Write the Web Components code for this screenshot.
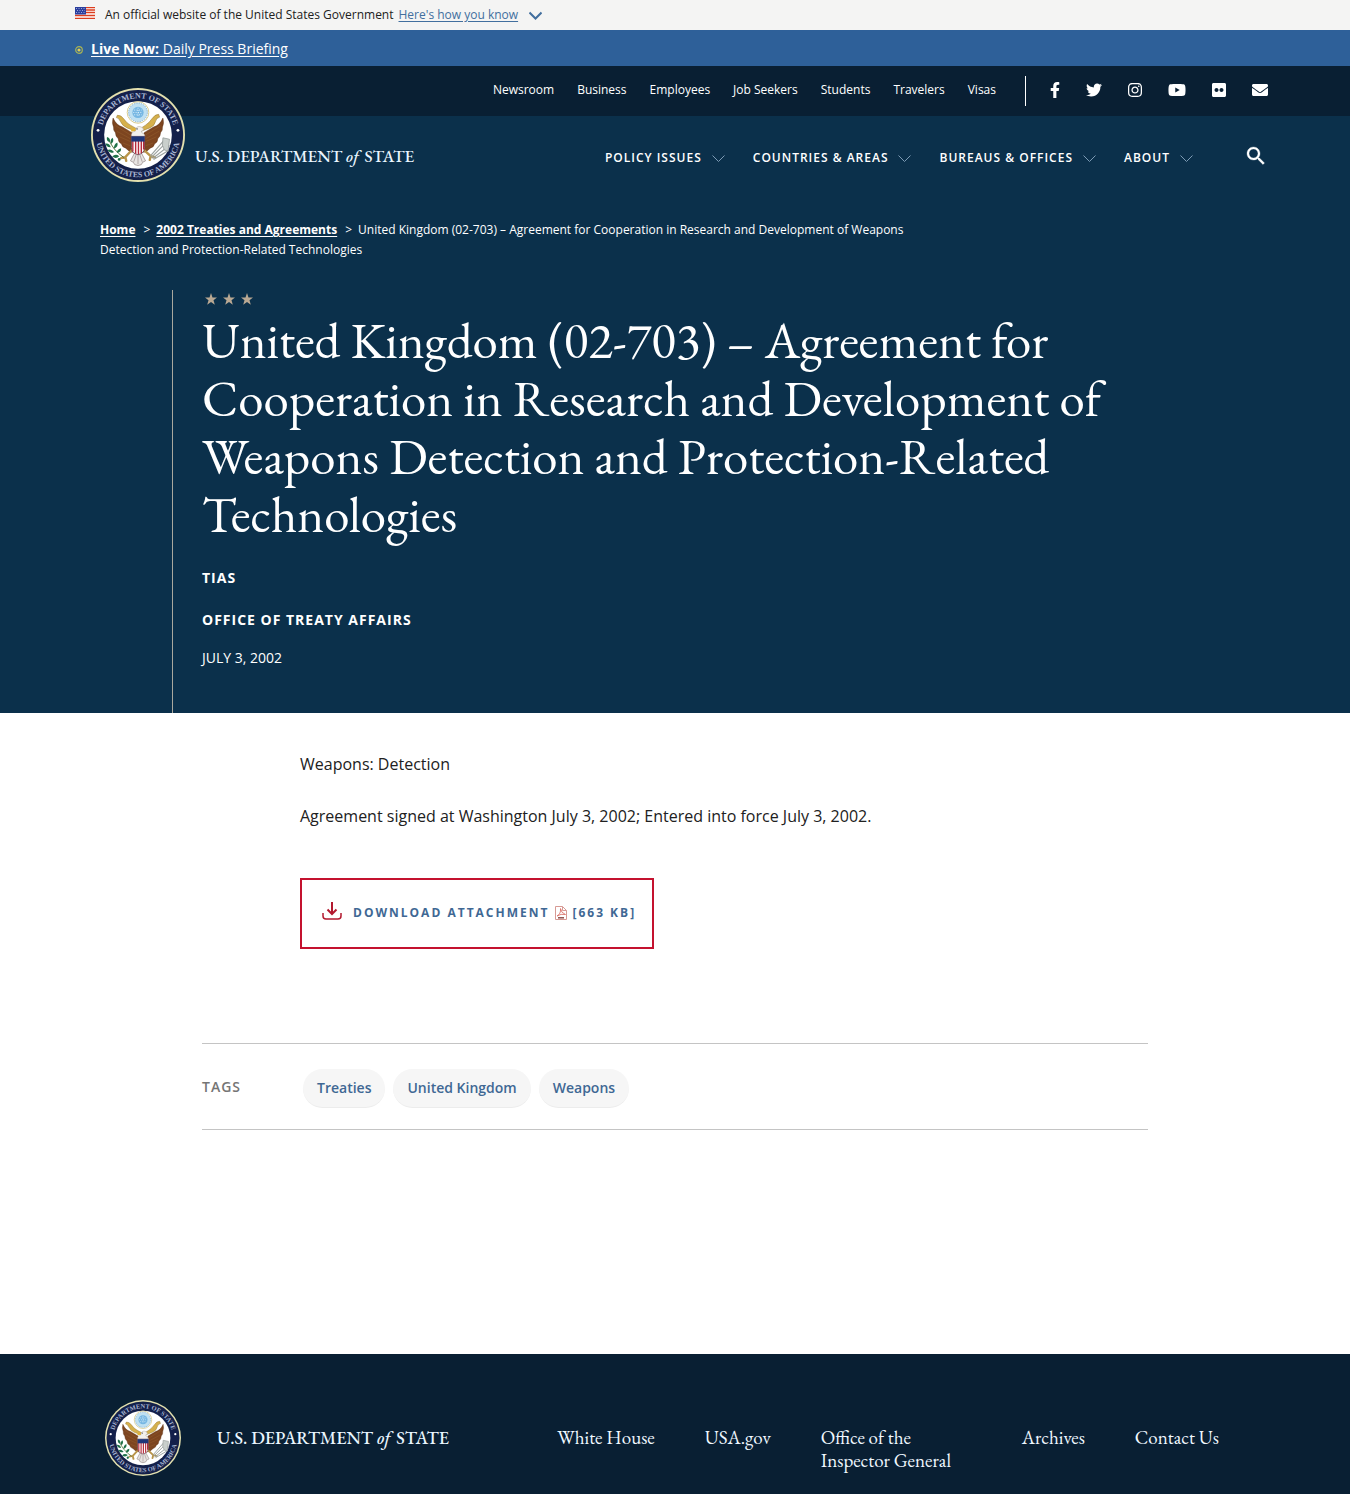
<!DOCTYPE html>
<html lang="en">
<head>
<meta charset="utf-8">
<meta name="viewport" content="width=device-width, initial-scale=1">
<title>United Kingdom (02-703) - United States Department of State</title>
<style>
  :root {
    --navy: #0b304b;
    --navy-dark: #091f33;
    --link: #3f6894;
    --sans: "Open Sans", "Noto Sans", sans-serif;
    --serif: "EB Garamond", "Liberation Serif", serif;
  }
  body { margin: 0; background: #fff; color: #212121; font-family: var(--sans); font-size: 16px; }
</style>
</head>
<body>
<state-page></state-page>

<script>
const define = (name, html) => {
  const tpl = document.createElement('template');
  tpl.innerHTML = html;
  customElements.define(name, class extends HTMLElement {
    constructor() {
      super();
      this.attachShadow({ mode: 'open' }).append(tpl.content.cloneNode(true));
    }
  });
};

/* Department seal; its size comes from --seal-size */
define('state-seal', `
<style>
  :host { display: block; flex: none; width: var(--seal-size, 94px); height: var(--seal-size, 94px); }
  svg { display: block; width: 100%; height: 100%; }
  text { font-family: "Liberation Serif", serif; font-weight: 700; font-size: 17px; fill: #a9b6d4; }
</style>
<svg viewBox="0 0 200 200" role="img" aria-label="Seal">
  <defs>
    <path id="top" d="M22 100a78 78 0 0 1 156 0"/>
    <path id="bottom" d="M10 100a90 90 0 0 0 180 0"/>
  </defs>
  <circle cx="100" cy="100" r="100" fill="#e3e0ae"/>
  <circle cx="100" cy="100" r="96" fill="#14204a"/>
  <circle cx="100" cy="100" r="72" fill="#fff"/>
  <text text-anchor="middle"><textPath href="#top" startOffset="50%">DEPARTMENT OF STATE</textPath></text>
  <text text-anchor="middle"><textPath href="#bottom" startOffset="50%">UNITED STATES OF AMERICA</textPath></text>
  <circle cx="15" cy="90" r="3" fill="#fff"/><circle cx="185" cy="90" r="3" fill="#fff"/>
  <!-- scroll -->
  <path d="M56 58q8-1 14 8t14 13l14 8-3 5-18-7q-10-4-14-13t-9-9z" fill="#d5b04c" stroke="#8a6c2a"/>
  <path d="M144 56q-8 0-14 9t-14 14l-12 8 3 5 18-7q10-4 12-13t9-10z" fill="#d5b04c" stroke="#8a6c2a"/>
  <!-- glory -->
  <circle cx="100" cy="52" r="23" fill="#fff" stroke="#d5c98a" stroke-width="2"/>
  <circle cx="100" cy="52" r="20" fill="#bfe0f2" stroke="#84aecb" stroke-width="2" stroke-dasharray="3 2"/>
  <circle cx="100" cy="52" r="12" fill="#77b7e3"/>
  <path d="M92 47h16M90 52h20M92 57h16M100 42v20" stroke="#e6f5fd" stroke-width="2" stroke-dasharray="2 3"/>
  <!-- wings -->
  <path d="M47 64q7 16 20 19l20 12 3 12-2 30q-9-3-14-9-8-2-9-9-7-3-7-11-6-5-6-13-5-5-4-12-4-8-1-19z" fill="#7d4520" stroke="#5b2f13" stroke-width="1"/>
  <path d="M153 64q-7 16-20 19l-20 12-3 12 2 30q9-3 14-9 8-2 9-9 7-3 7-11 6-5 6-13 5-5 4-12 4-8 1-19z" fill="#7d4520" stroke="#5b2f13" stroke-width="1"/>
  <path d="M52 80l32 20M55 92l29 16M61 104l23 10M68 117l16 6M148 80l-32 20M145 92l-29 16M139 104l-23 10M132 117l-16 6" stroke="#99622f" stroke-width="1" fill="none"/>
  <!-- tail, legs -->
  <path d="M93 138h14l9 17-6 3-3 5-7 2-7-2-3-5-6-3z" fill="#e8e4e2" stroke="#8e8280" stroke-width="1.500"/>
  <path d="M96 142l-5 15M100 142v20M104 142l5 15" stroke="#9b8f8d" stroke-width="1.500"/>
  <path d="M87 132l-14 15-9 2M113 132l14 13 9 2M73 147l2 8M127 145l-2 8" stroke="#b9954a" stroke-width="5" fill="none" stroke-linecap="round"/>
  <!-- head -->
  <path d="M86 104q-2-10 8-12 1-11 10-10 8 1 8 8l-5 2 2 4q7 2 5 9z" fill="#f3f1ee" stroke="#a59a90" stroke-width="1"/>
  <path d="M94 85l-9 3 1 5 9-2z" fill="#e1b234"/>
  <circle cx="98" cy="87" r="1.500" fill="#333"/>
  <!-- shield -->
  <path d="M86 103h28v24q0 12-14 15-14-3-14-15z" fill="#fff" stroke="#4a2436" stroke-width="1.500"/>
  <path d="M89 113v22M95 113v27M101 113v28M107 113v26M112 113v18" stroke="#b52a3b" stroke-width="3"/>
  <path d="M86 103h28v11h-28z" fill="#1e3678"/>
  <!-- olive branch -->
  <path d="M36 106q10 26 34 42" stroke="#4c6b32" stroke-width="2" fill="none"/>
  <path d="M34 104q8 2 6 11-8-2-6-11zM46 106q4 8-3 13-4-8 3-13zM31 118q9-1 11 8-9 1-11-8zM56 116q3 9-7 13-1-9 7-13zM35 132q8-4 14 4-8 5-14-4zM64 128q1 9-9 10 0-8 9-10zM45 146q7-7 15-1-6 7-15 1z" fill="#1f7148"/>
  <circle cx="60" cy="152" r="3" fill="#1f7148"/>
  <!-- arrows -->
  <path d="M128 148l34-34M131 150l36-28M133 152l32-19M126 145l28-32" stroke="#9ba2a0" stroke-width="2.500"/>
  <path d="M153 106l14 3-3 25-8-2-4-10z" fill="#c9cfcc" stroke="#8c9391" stroke-width="1.500"/>
</svg>`);

define('state-chevron', `
<style>
  :host { display: block; flex: none; }
  svg { display: block; width: 13px; height: 13px; fill: none; stroke: currentColor; stroke-width: var(--chevron-weight, 1); }
</style>
<svg viewBox="0 0 13 13" aria-hidden="true"><path d="M0.500 3.500l6 6 6-6"/></svg>`);

define('state-brand', `
<style>
  :host { display: block; color: #eaf6ff; font-family: var(--serif); font-size: var(--brand-size, 17px); font-weight: 500; line-height: 24px; white-space: nowrap; }
  i { margin-right: 2px; }
</style>
<span>U.S. DEPARTMENT <i>of</i> STATE</span>`);

define('gov-banner', `
<style>
  :host { display: block; background: #f4f4f3; }
  div { display: flex; align-items: center; box-sizing: border-box; max-width: 1200px; height: 30px; margin: 0 auto; padding-bottom: 2px; font-size: 12px; color: #212121; }
  .flag { width: 20px; height: 12px; margin: 0 10px 2px 0; }
  span { margin-right: 5px; }
  button { display: flex; align-items: center; gap: 11px; border: 0; padding: 0; background: none; font: inherit; color: #426f9e; cursor: pointer; }
  u { text-underline-offset: 2px; }
  state-chevron { --chevron-weight: 2; padding-top: 2px; }
</style>
<div>
  <svg class="flag" viewBox="0 0 20 12" aria-hidden="true">
    <path d="M0 0h20v12H0z" fill="#fff"/>
    <path d="M0 .500h20M0 3h20M0 5.500h20M0 8.500h20M0 11.300h20" stroke="#db3e1f" stroke-width="1.300"/>
    <path d="M0 0h11v7.500H0z" fill="#2b3f9e"/>
    <path d="M1 1.500h9M2 3.500h8M1 5.500h9" stroke="#b9c0ea" stroke-width=".8" stroke-dasharray="1 1.500"/>
  </svg>
  <span>An official website of the United States Government</span>
  <button type="button"><u>Here's how you know</u><state-chevron></state-chevron></button>
</div>`);

define('live-bar', `
<style>
  :host { display: block; background: #2e6099; }
  div { display: flex; align-items: center; gap: 8px; max-width: 1200px; height: 36px; margin: 0 auto; }
  svg { width: 8px; height: 8px; margin-top: 4px; }
  a { color: #fff; font-size: 14px; text-underline-offset: 2px; }
</style>
<div>
  <svg viewBox="0 0 8 8" aria-hidden="true"><circle cx="4" cy="4" r="3.300" fill="none" stroke="#a9b454" stroke-width="1.200"/><circle cx="4" cy="4" r="1.600" fill="#e0cf58"/></svg>
  <a href="#live"><b>Live Now:</b> Daily Press Briefing</a>
</div>`);

define('social-links', `
<style>
  :host { display: flex; align-items: center; gap: 26px; }
  a { display: block; color: #fff; }
  svg { display: block; height: 16px; fill: currentColor; }
</style>
<a href="#facebook" aria-label="Facebook"><svg viewBox="0 0 320 512"><path d="M279.14 288l14.22-92.66h-88.91v-60.13c0-25.35 12.42-50.06 52.24-50.06h40.42V6.26S260.43 0 225.36 0c-73.22 0-121.08 44.38-121.08 124.72v70.62H22.89V288h81.39v224h100.17V288z"/></svg></a>
<a href="#twitter" aria-label="Twitter"><svg viewBox="0 0 512 512"><path d="M459.37 151.716c.325 4.548.325 9.097.325 13.645 0 138.72-105.583 298.558-298.558 298.558-59.452 0-114.68-17.219-161.137-47.106 8.447.974 16.568 1.299 25.34 1.299 49.055 0 94.213-16.568 130.274-44.832-46.132-.975-84.792-31.188-98.112-72.772 6.498.974 12.995 1.624 19.818 1.624 9.421 0 18.843-1.3 27.614-3.573-48.081-9.747-84.143-51.98-84.143-102.985v-1.299c13.969 7.797 30.214 12.67 47.431 13.319-28.264-18.843-46.781-51.005-46.781-87.391 0-19.492 5.197-37.36 14.294-52.954 51.655 63.675 129.3 105.258 216.365 109.807-1.624-7.797-2.599-15.918-2.599-24.04 0-57.828 46.782-104.934 104.934-104.934 30.213 0 57.502 12.67 76.67 33.137 23.715-4.548 46.456-13.32 66.599-25.34-7.798 24.366-24.366 44.833-46.132 57.827 21.117-2.273 41.584-8.122 60.426-16.243-14.292 20.791-32.161 39.308-52.628 54.253z"/></svg></a>
<a href="#instagram" aria-label="Instagram"><svg viewBox="0 0 448 512"><path d="M224.1 141c-63.6 0-114.9 51.3-114.9 114.9s51.3 114.9 114.9 114.9S339 319.5 339 255.9 287.7 141 224.1 141zm0 189.6c-41.1 0-74.7-33.5-74.7-74.7s33.5-74.7 74.7-74.7 74.7 33.5 74.7 74.7-33.6 74.7-74.7 74.7zm146.4-194.3c0 14.9-12 26.8-26.8 26.8-14.9 0-26.8-12-26.8-26.8s12-26.8 26.8-26.8 26.8 12 26.8 26.8zm76.1 27.2c-1.7-35.9-9.9-67.7-36.2-93.9-26.2-26.2-58-34.4-93.9-36.2-37-2.1-147.9-2.1-184.9 0-35.8 1.7-67.6 9.9-93.9 36.1s-34.4 58-36.2 93.9c-2.1 37-2.1 147.9 0 184.9 1.7 35.9 9.9 67.7 36.2 93.9s58 34.4 93.9 36.2c37 2.1 147.9 2.1 184.9 0 35.9-1.7 67.7-9.9 93.9-36.2 26.2-26.2 34.4-58 36.2-93.9 2.1-37 2.1-147.8 0-184.8zM398.8 388c-7.8 19.6-22.9 34.7-42.6 42.6-29.5 11.7-99.5 9-132.1 9s-102.7 2.6-132.1-9c-19.6-7.8-34.7-22.9-42.6-42.6-11.7-29.5-9-99.5-9-132.1s-2.6-102.7 9-132.1c7.8-19.6 22.9-34.7 42.6-42.6 29.5-11.7 99.5-9 132.1-9s102.7-2.6 132.1 9c19.6 7.8 34.7 22.9 42.6 42.6 11.7 29.5 9 99.5 9 132.1s2.7 102.7-9 132.1z"/></svg></a>
<a href="#youtube" aria-label="YouTube"><svg viewBox="0 0 576 512"><path d="M549.655 124.083c-6.281-23.65-24.787-42.276-48.284-48.597C458.781 64 288 64 288 64S117.22 64 74.629 75.486c-23.497 6.322-42.003 24.947-48.284 48.597-11.412 42.867-11.412 132.305-11.412 132.305s0 89.438 11.412 132.305c6.281 23.65 24.787 41.5 48.284 47.821C117.22 448 288 448 288 448s170.78 0 213.371-11.486c23.497-6.321 42.003-24.171 48.284-47.821 11.412-42.867 11.412-132.305 11.412-132.305s0-89.438-11.412-132.305zm-317.51 213.508V175.185l142.739 81.205-142.739 81.201z"/></svg></a>
<a href="#flickr" aria-label="Flickr"><svg viewBox="0 0 448 512"><path d="M400 32H48C21.5 32 0 53.5 0 80v352c0 26.5 21.5 48 48 48h352c26.5 0 48-21.5 48-48V80c0-26.5-21.5-48-48-48zM144.5 319c-35.1 0-63.5-28.4-63.5-63.5s28.4-63.5 63.5-63.5 63.5 28.4 63.5 63.5-28.4 63.5-63.5 63.5zm159 0c-35.1 0-63.5-28.4-63.5-63.5s28.4-63.5 63.5-63.5 63.5 28.4 63.5 63.5-28.4 63.5-63.5 63.5z"/></svg></a>
<a href="#email" aria-label="Email"><svg viewBox="0 0 512 512"><path d="M502.3 190.8c3.9-3.1 9.7-.2 9.7 4.7V400c0 26.5-21.5 48-48 48H48c-26.5 0-48-21.5-48-48V195.6c0-5 5.7-7.8 9.7-4.7 22.4 17.4 52.1 39.5 154.1 113.6 21.1 15.4 56.7 47.8 92.2 47.6 35.7.3 72-32.8 92.3-47.6 102-74.1 131.6-96.3 154-113.7zM256 320c23.2.4 56.6-29.2 73.4-41.4 132.7-96.3 142.8-104.7 173.4-128.7 5.8-4.5 9.2-11.5 9.2-18.9v-19c0-26.5-21.5-48-48-48H48c-26.5 0-48 21.5-48 48v19c0 7.4 3.4 14.3 9.2 18.9 30.6 23.9 40.7 32.4 173.4 128.7 16.8 12.2 50.2 41.8 73.4 41.4z"/></svg></a>`);

define('nav-item', `
<style>
  :host { display: block; }
  button { display: flex; align-items: center; gap: 10px; border: 0; padding: 0; background: none; color: #fff; font: 600 12px/20px var(--sans); text-transform: uppercase; white-space: nowrap; cursor: pointer; letter-spacing: 1px; }
  state-chevron { color: #7d9bb5; }
</style>
<button type="button" aria-expanded="false"><slot></slot><state-chevron></state-chevron></button>`);

define('site-header', `
<style>
  :host { display: block; background: linear-gradient(var(--navy-dark) 50px, var(--navy) 50px); }
  .wrap { display: flex; justify-content: space-between; box-sizing: border-box; max-width: 1186px; margin: 0 auto; padding-left: 9px; }
  .home { display: flex; align-items: flex-end; gap: 10px; height: 94px; padding-top: 22px; text-decoration: none; }
  state-brand { margin-bottom: 14px; }
  .menus { display: flex; flex-direction: column; align-items: flex-end; }
  .top { display: flex; align-items: center; height: 50px; }
  .links { display: flex; gap: 23px; margin-right: 29px; padding-bottom: 2px; }
  .links a { color: #fff; font-size: 12px; line-height: 20px; text-decoration: none; }
  social-links { box-sizing: border-box; height: 30px; padding: 0 0 2px 24px; border-left: 1px solid #fff; }
  .main { display: flex; align-items: center; gap: 28px; height: 84px; margin-bottom: -2px; }
  .search { margin: 0 0 4px 23px; border: 0; padding: 0; background: none; color: #fff; cursor: pointer; }
  .search svg { display: block; width: 24px; height: 24px; fill: currentColor; }
</style>
<div class="wrap">
  <a class="home" href="#home" aria-label="Home"><state-seal></state-seal><state-brand></state-brand></a>
  <div class="menus">
    <div class="top">
      <nav class="links" aria-label="Audiences">
        <a href="#newsroom">Newsroom</a><a href="#business">Business</a><a href="#employees">Employees</a><a href="#jobs">Job Seekers</a><a href="#students">Students</a><a href="#travelers">Travelers</a><a href="#visas">Visas</a>
      </nav>
      <social-links></social-links>
    </div>
    <nav class="main" aria-label="Main">
      <nav-item>Policy Issues</nav-item><nav-item>Countries &amp; Areas</nav-item><nav-item>Bureaus &amp; Offices</nav-item><nav-item>About</nav-item>
      <button class="search" type="button" aria-label="Search"><svg viewBox="0 0 24 24"><path stroke="currentColor" stroke-width=".3" d="M15.500 14h-.79l-.28-.27C15.410 12.590 16 11.110 16 9.500 16 5.910 13.090 3 9.500 3S3 5.910 3 9.500 5.910 16 9.500 16c1.610 0 3.090-.59 4.230-1.570l.27.28v.79l5 4.990L20.490 19l-4.990-5zm-6 0C7.010 14 5 11.990 5 9.500S7.010 5 9.500 5 14 7.010 14 9.500 11.990 14 9.500 14z"/></svg></button>
    </nav>
  </div>
</div>`);

define('page-hero', `
<style>
  :host { display: block; background: var(--navy); color: #fff; }
  .crumbs { max-width: 1150px; margin: 0 auto; padding: 22px 0 30px; }
  ol { margin: 0; padding: 0; list-style: none; max-width: 850px; font-size: 12px; line-height: 20px; }
  li { display: inline; }
  .sep { margin: 0 6px 0 8px; }
  li a { color: #fff; font-weight: 700; text-underline-offset: 2px; }
  .box { box-sizing: border-box; max-width: 1006px; margin: 0 auto; padding: 3px 0 43px 29px; border-left: 1px solid #aaa89e; }
  .stars { display: flex; gap: 6px; margin-left: 3px; }
  .stars svg { display: block; width: 12px; height: 12px; fill: #b9a893; }
  h1 { margin: 6px 0 23px; font: 400 51px/58px var(--serif); }
  p { margin: 0; font-size: 14px; line-height: 24px; }
  .kind { margin-bottom: 18px; font-weight: 700; letter-spacing: 1px; text-transform: uppercase; }
  .date { text-transform: uppercase; margin-top: -4px; }
</style>
<nav class="crumbs" aria-label="Breadcrumb"><ol><li><a href="#home">Home</a></li><li><span class="sep">&gt;</span></li><li><a href="#2002">2002 Treaties and Agreements</a></li><li><span class="sep">&gt;</span></li><li>United Kingdom (02-703) – Agreement for Cooperation in Research and Development of Weapons Detection and Protection-Related Technologies</li></ol></nav>
<div class="box">
  <div class="stars" aria-hidden="true">
    <svg viewBox="0 0 24 24"><path d="M12 0l3 9h9l-7 5.500 2.600 9L12 18l-7.600 5.500 2.600-9L0 9h9z"/></svg>
    <svg viewBox="0 0 24 24"><path d="M12 0l3 9h9l-7 5.500 2.600 9L12 18l-7.600 5.500 2.600-9L0 9h9z"/></svg>
    <svg viewBox="0 0 24 24"><path d="M12 0l3 9h9l-7 5.500 2.600 9L12 18l-7.600 5.500 2.600-9L0 9h9z"/></svg>
  </div>
  <h1>United Kingdom (02-703) – Agreement for Cooperation in Research and Development of Weapons Detection and Protection-Related Technologies</h1>
  <p class="kind">TIAS</p>
  <p class="kind">Office of Treaty Affairs</p>
  <p class="date">July 3, 2002</p>
</div>`);

define('download-link', `
<style>
  :host { display: block; }
  a { display: inline-flex; align-items: center; box-sizing: border-box; min-height: 71px; padding: 0 16px 2px 20px; border: 2px solid #c4122f; color: var(--link); font-size: 12px; font-weight: 700; line-height: 20px; letter-spacing: 2px; text-decoration: none; text-transform: uppercase; }
  .arrow { width: 20px; height: 18px; margin: 0 11px 4px 0; fill: none; stroke: #b3192f; stroke-width: 2; }
  .pdf { width: 12px; height: 14px; margin: 0 5px 0 6px; }
</style>
<a href="#attachment">
  <svg class="arrow" viewBox="0 0 20 18" aria-hidden="true"><path d="M10 0v12M5.500 7.500L10 12l4.500-4.500"/><path stroke-width="1.500" d="M1 11v3q0 3 3 3h12q3 0 3-3v-3"/></svg>
  <span>Download Attachment</span>
  <svg class="pdf" viewBox="0 0 12 14" aria-hidden="true"><path d="M.500.500h7l4 4v9H.500z" fill="#fff" stroke="#d79a94"/><path d="M7.500.500v4h4" fill="none" stroke="#d79a94"/><path d="M2 10q4-2 3.500-7.500Q6 7 10.500 8.500 6 7.500 2 10z" fill="none" stroke="#d8685e" stroke-width=".8"/><path d="M3 11.800h6" stroke="#8d4f4a" stroke-width="1.500"/></svg>
  <span>[663 KB]</span>
</a>`);

define('tag-pill', `
<style>
  :host { display: block; }
  a { display: block; padding: 8px 14px; border-radius: 20px; border-bottom: 1px solid #ececec; background: #f6f6f6; color: var(--link); font-size: 14px; font-weight: 600; line-height: 22px; text-decoration: none; }
</style>
<a href="#tag"><slot></slot></a>`);

define('tag-row', `
<style>
  :host { display: flex; align-items: center; box-sizing: border-box; max-width: 946px; min-height: 87px; margin: 94px auto 224px; border: solid #c4c4c4; border-width: 1px 0; }
  h2 { margin: 0; width: 101px; font-size: 14px; font-weight: 600; letter-spacing: 1px; line-height: 22px; color: #757575; }
  div { display: flex; flex-wrap: wrap; gap: 8px; padding-top: 3px; }
</style>
<h2>TAGS</h2>
<div><tag-pill>Treaties</tag-pill><tag-pill>United Kingdom</tag-pill><tag-pill>Weapons</tag-pill></div>`);

define('article-body', `
<style>
  :host { display: block; box-sizing: border-box; max-width: 750px; margin: 0 auto; padding-top: 38px; }
  ::slotted(p) { margin: 0 0 26px; line-height: 26px; }
  download-link { margin-top: 49px; }
</style>
<slot></slot>
<download-link></download-link>`);

define('site-footer', `
<style>
  :host { display: block; background: var(--navy-dark); }
  .wrap { display: flex; max-width: 1140px; height: 94px; margin: 0 auto; padding-top: 46px; }
  state-seal { --seal-size: 76px; }
  state-brand { --brand-size: 18px; margin: 26px 0 0 36px; }
  nav { display: flex; align-items: flex-start; gap: 50px; margin: 26px 0 0 auto; padding-right: 26px; }
  a { color: #f0f8ff; font: 400 19px/23px var(--serif); text-decoration: none; }
  .wide { width: 151px; }
</style>
<div class="wrap">
  <state-seal></state-seal>
  <state-brand></state-brand>
  <nav aria-label="Footer">
    <a href="#wh">White House</a><a href="#usa">USA.gov</a><a class="wide" href="#oig">Office of the Inspector General</a><a href="#archives">Archives</a><a href="#contact">Contact Us</a>
  </nav>
</div>`);

define('state-page', `
<style>:host { display: block; } p { color: #212121; }</style>
<gov-banner></gov-banner>
<live-bar></live-bar>
<site-header></site-header>
<main>
  <page-hero></page-hero>
  <article-body>
    <p>Weapons: Detection</p>
    <p>Agreement signed at Washington July 3, 2002; Entered into force July 3, 2002.</p>
  </article-body>
  <tag-row></tag-row>
</main>
<site-footer></site-footer>`);
</script>
</body>
</html>
